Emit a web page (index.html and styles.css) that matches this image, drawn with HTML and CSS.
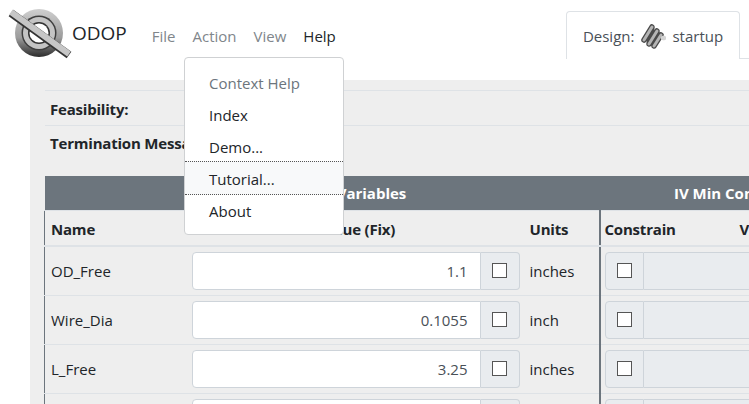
FILE: index.html
```html
<!DOCTYPE html>
<html lang="en">
<head>
    <meta charset="UTF-8">
    <title>ODOP</title>
    <link rel="stylesheet" href="styles.css">
</head>
<body>

    <nav class="barra">
        <svg class="logo" viewBox="0 0 64 54" width="64" height="54" aria-label="ODOP logo">
            <defs>
                <linearGradient id="aro" x1="0" y1="0" x2="0" y2="1">
                    <stop offset="0" stop-color="#cfcfcf"/>
                    <stop offset="0.6" stop-color="#9c9c9c"/>
                    <stop offset="1" stop-color="#2c2c2c"/>
                </linearGradient>
            </defs>
            <circle cx="31" cy="27" r="24" fill="url(#aro)"/>
            <circle cx="31" cy="27" r="17.5" fill="#3e3e3e"/>
            <circle cx="31" cy="27" r="16" fill="#c4c4c4"/>
            <circle cx="31" cy="27" r="11" fill="#333"/>
            <circle cx="31" cy="27" r="9.5" fill="#fff"/>
            <path d="M3 7 L61 49" stroke="#333" stroke-width="8"/>
            <path d="M3 6 L61 48" stroke="#c6c6c6" stroke-width="6"/>
        </svg>
        <span class="marca">ODOP</span>
        <ul class="menu">
            <li>File</li>
            <li>Action</li>
            <li>View</li>
            <li class="activo">Help</li>
        </ul>
        <div class="pestana">
            <span>Design:</span>
            <svg class="muelle" viewBox="0 0 26 26" width="26" height="26" aria-hidden="true">
                <g fill="none" stroke-linecap="round" stroke-linejoin="round">
                    <path d="M4 17 L12 4 L9 21 L17 8 L14 23 L21 12" stroke="#4a4a4a" stroke-width="5.5"/>
                    <path d="M4 17 L12 4 M9 21 L17 8 M14 23 L21 12" stroke="#b4b4b4" stroke-width="3"/>
                    <path d="M23 15 L24 15" stroke="#d4d4d4" stroke-width="4.5"/>
                </g>
            </svg>
            <span>startup</span>
        </div>
    </nav>

    <!-- Menu abierto sobre el contenido -->
    <div class="desplegable">
        <div class="opcion apagada">Context Help</div>
        <div class="opcion">Index</div>
        <div class="opcion">Demo...</div>
        <div class="opcion marcada">Tutorial...</div>
        <div class="opcion">About</div>
    </div>

    <main class="contenedor">
        <div class="fila-info fila-feas"><b>Feasibility:</b></div>
        <div class="fila-info fila-term"><b>Termination Message:</b></div>

        <table class="tabla">
            <colgroup>
                <col class="c-nombre">
                <col class="c-valor">
                <col class="c-unidad">
                <col class="c-limite">
                <col class="c-resto">
            </colgroup>
            <thead>
                <tr class="cabecera">
                    <th colspan="3">Independent Variables</th>
                    <th colspan="2" class="corte">IV Min Constraint</th>
                </tr>
                <tr class="titulos">
                    <th>Name</th>
                    <th class="centro">Value (Fix)</th>
                    <th>Units</th>
                    <th class="corte">Constrain</th>
                    <th>Value</th>
                </tr>
            </thead>
            <tbody>
                <tr>
                    <td>OD_Free</td>
                    <td><div class="grupo"><span class="entrada">1.1</span><span class="caja"><i></i></span></div></td>
                    <td>inches</td>
                    <td class="corte" colspan="2"><div class="grupo"><span class="caja caja-izq"><i></i></span><span class="entrada inactiva"></span></div></td>
                </tr>
                <tr>
                    <td>Wire_Dia</td>
                    <td><div class="grupo"><span class="entrada">0.1055</span><span class="caja"><i></i></span></div></td>
                    <td>inch</td>
                    <td class="corte" colspan="2"><div class="grupo"><span class="caja caja-izq"><i></i></span><span class="entrada inactiva"></span></div></td>
                </tr>
                <tr>
                    <td>L_Free</td>
                    <td><div class="grupo"><span class="entrada">3.25</span><span class="caja"><i></i></span></div></td>
                    <td>inches</td>
                    <td class="corte" colspan="2"><div class="grupo"><span class="caja caja-izq"><i></i></span><span class="entrada inactiva"></span></div></td>
                </tr>
                <tr>
                    <td></td>
                    <td><div class="grupo"><span class="entrada"></span><span class="caja"></span></div></td>
                    <td></td>
                    <td class="corte" colspan="2"><div class="grupo"><span class="caja caja-izq"></span><span class="entrada inactiva"></span></div></td>
                </tr>
            </tbody>
        </table>
    </main>

</body>
</html>
```

FILE: styles.css
```css
html, body {
    height: 404px;
    overflow: hidden;
}
body {
    margin: 0;
    font-family: "Open Sans", "Noto Sans", sans-serif;
    font-size: 15px;
    color: #212529;
    background-color: #fff;
    position: relative;
}
b, .titulos th {
    letter-spacing: -0.2px;
}
/* Barra superior */
.barra {
    display: flex;
    align-items: flex-start;
    height: 59px;
    box-sizing: border-box;
    margin-bottom: 21px;
}
.logo {
    margin: 6px 0 0 8px;
    flex: none;
}
.marca {
    font-size: 19px;
    margin: 20px 0 0 0;
    line-height: 26px;
}
.menu {
    display: flex;
    list-style: none;
    margin: 25px 0 0 25px;
    padding: 0;
    gap: 17px;
    line-height: 22px;
    color: #80868b;
}
.activo {
    color: #212529;
}
.pestana {
    position: absolute;
    top: 11px;
    left: 566px;
    width: 174px;
    height: 48px;
    box-sizing: border-box;
    display: flex;
    align-items: center;
    justify-content: center;
    gap: 6px;
    color: #495057;
    background-color: #fff;
    border: 1px solid #dee2e6;
    border-bottom: none;
    border-radius: 4px 4px 0 0;
}
.pestana::after {
    content: "";
    position: absolute;
    left: 173px;
    bottom: 0;
    width: 10px;
    border-bottom: 1px solid #dee2e6;
}
/* Menu desplegable */
.desplegable {
    position: absolute;
    top: 57px;
    left: 184px;
    width: 160px;
    box-sizing: border-box;
    padding: 9px 0 7px;
    background-color: #fff;
    border: 1px solid #cfd1d3;
    border-radius: 4px;
    z-index: 2;
}
.opcion {
    height: 32px;
    line-height: 32px;
    padding-left: 24px;
    color: #212529;
}
.apagada {
    color: #6c757d;
}
.marcada {
    box-sizing: border-box;
    height: 34px;
    margin-top: -2px;
    padding-top: 1px;
    background-color: #f8f9fa;
    border-top: 1px dotted #555;
    border-bottom: 1px dotted #555;
}
/* Contenido */
.contenedor {
    margin-left: 30px;
    padding: 10px 0 0 15px;
    width: 719px;
    height: 324px;
    box-sizing: border-box;
    background-color: #eee;
    overflow: hidden;
}
.fila-info {
    width: 704px;
    border-top: 1px solid #dee2e6;
    padding-left: 5px;
}
.fila-feas {
    height: 34px;
    line-height: 36px;
}
.fila-term {
    height: 50px;
    line-height: 35px;
}
.tabla {
    table-layout: fixed;
    width: 830px;
    margin-left: -1px;
    border-collapse: collapse;
}
.c-nombre { width: 141px; }
.c-valor { width: 338px; }
.c-unidad { width: 76px; }
.c-limite { width: 134px; }
.cabecera th {
    height: 34px;
    padding: 0;
    color: #fff;
    background-color: #6c757d;
    text-align: center;
}
.titulos th {
    height: 35px;
    padding: 3px 0 0 6px;
    box-sizing: border-box;
    text-align: left;
    border-top: 1px solid #dee2e6;
    border-bottom: 2px solid #dee2e6;
}
.titulos th:first-child,
.tabla td:first-child {
    border-left: 1px solid #6c757d;
}
.titulos .centro {
    text-align: center;
}
.tabla .corte {
    border-left: 2px solid #6c757d;
    padding-left: 4px;
}
.tabla td {
    height: 48px;
    padding: 0 0 0 6px;
    border-bottom: 1px solid #dee2e6;
}
.tabla td:nth-child(2) {
    padding: 0 4px 0 6px;
}
.grupo {
    display: flex;
    height: 38px;
}
.entrada {
    flex: 1;
    box-sizing: border-box;
    padding: 0 12px;
    line-height: 36px;
    text-align: right;
    color: #495057;
    background-color: #fff;
    border: 1px solid #ced4da;
    border-radius: 4px 0 0 4px;
}
.tabla .inactiva {
    background-color: #e9ecef;
    border-radius: 0;
    border-right: none;
    border-left: none;
}
.caja {
    flex: none;
    width: 39px;
    box-sizing: border-box;
    display: flex;
    align-items: center;
    justify-content: center;
    background-color: #e9ecef;
    border: 1px solid #ced4da;
    border-left: none;
    border-radius: 0 4px 4px 0;
}
.caja-izq {
    border-left: 1px solid #ced4da;
    border-radius: 4px 0 0 4px;
}
.caja i {
    width: 13px;
    height: 13px;
    background-color: #fff;
    border: 1px solid #555;
}
```
